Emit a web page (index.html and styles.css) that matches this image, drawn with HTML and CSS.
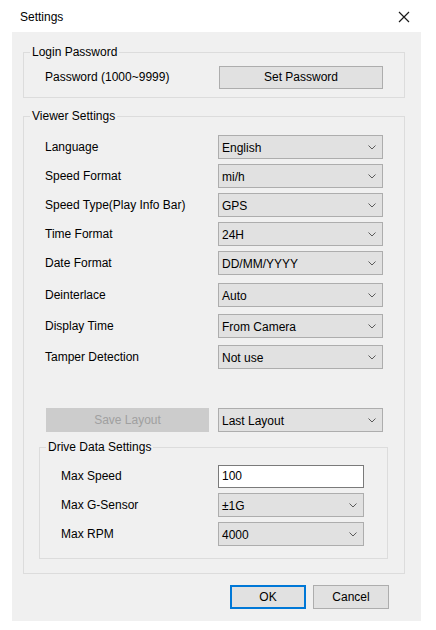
FILE: index.html
```html
<!DOCTYPE html>
<html>
<head>
<meta charset="utf-8">
<link rel="stylesheet" href="styles.css">
</head>
<body>
<div class="window">
  <div class="titlebar">
    <span class="title">Settings</span>
    <svg class="close" width="12" height="12" viewBox="0 0 12 12"><path d="M1 1 L11 11 M11 1 L1 11" stroke="#1a1a1a" stroke-width="1.2" fill="none"/></svg>
  </div>
  <div class="client">
    <fieldset class="group outer login">
      <legend>Login Password</legend>
      <div class="row">
        <span class="label">Password (1000~9999)</span>
        <button class="btn set">Set Password</button>
      </div>
    </fieldset>

    <fieldset class="group outer viewer">
      <legend>Viewer Settings</legend>
      <div class="rows tight">
        <div class="row"><span class="label">Language</span><div class="combo"><span>English</span><svg width="8" height="5" viewBox="0 0 8 5"><path d="M0.5 0.5 L4 4 L7.5 0.5" fill="none" stroke="#5a5a5a"/></svg></div></div>
        <div class="row"><span class="label">Speed Format</span><div class="combo"><span>mi/h</span><svg width="8" height="5" viewBox="0 0 8 5"><path d="M0.5 0.5 L4 4 L7.5 0.5" fill="none" stroke="#5a5a5a"/></svg></div></div>
        <div class="row"><span class="label">Speed Type(Play Info Bar)</span><div class="combo"><span>GPS</span><svg width="8" height="5" viewBox="0 0 8 5"><path d="M0.5 0.5 L4 4 L7.5 0.5" fill="none" stroke="#5a5a5a"/></svg></div></div>
        <div class="row"><span class="label">Time Format</span><div class="combo"><span>24H</span><svg width="8" height="5" viewBox="0 0 8 5"><path d="M0.5 0.5 L4 4 L7.5 0.5" fill="none" stroke="#5a5a5a"/></svg></div></div>
        <div class="row"><span class="label">Date Format</span><div class="combo"><span>DD/MM/YYYY</span><svg width="8" height="5" viewBox="0 0 8 5"><path d="M0.5 0.5 L4 4 L7.5 0.5" fill="none" stroke="#5a5a5a"/></svg></div></div>
      </div>
      <div class="rows wide">
        <div class="row"><span class="label">Deinterlace</span><div class="combo"><span>Auto</span><svg width="8" height="5" viewBox="0 0 8 5"><path d="M0.5 0.5 L4 4 L7.5 0.5" fill="none" stroke="#5a5a5a"/></svg></div></div>
        <div class="row"><span class="label">Display Time</span><div class="combo"><span>From Camera</span><svg width="8" height="5" viewBox="0 0 8 5"><path d="M0.5 0.5 L4 4 L7.5 0.5" fill="none" stroke="#5a5a5a"/></svg></div></div>
        <div class="row"><span class="label">Tamper Detection</span><div class="combo"><span>Not use</span><svg width="8" height="5" viewBox="0 0 8 5"><path d="M0.5 0.5 L4 4 L7.5 0.5" fill="none" stroke="#5a5a5a"/></svg></div></div>
      </div>

      <div class="row layout-row">
        <button class="btn disabled" disabled>Save Layout</button>
        <div class="combo"><span>Last Layout</span><svg width="8" height="5" viewBox="0 0 8 5"><path d="M0.5 0.5 L4 4 L7.5 0.5" fill="none" stroke="#5a5a5a"/></svg></div>
      </div>

      <fieldset class="group drive">
        <legend>Drive Data Settings</legend>
        <div class="rows">
          <div class="row"><span class="label">Max Speed</span><div class="textbox">100</div></div>
          <div class="row"><span class="label">Max G-Sensor</span><div class="combo"><span>±1G</span><svg width="8" height="5" viewBox="0 0 8 5"><path d="M0.5 0.5 L4 4 L7.5 0.5" fill="none" stroke="#5a5a5a"/></svg></div></div>
          <div class="row"><span class="label">Max RPM</span><div class="combo"><span>4000</span><svg width="8" height="5" viewBox="0 0 8 5"><path d="M0.5 0.5 L4 4 L7.5 0.5" fill="none" stroke="#5a5a5a"/></svg></div></div>
        </div>
      </fieldset>
    </fieldset>

    <div class="actions">
      <button class="btn dlg ok">OK</button>
      <button class="btn dlg">Cancel</button>
    </div>
  </div>
</div>
</body>
</html>
```
FILE: styles.css
```css
* { box-sizing: border-box; }
html, body { margin: 0; padding: 0; background: #ffffff; }
body {
  font-family: "Liberation Sans", Arial, sans-serif;
  font-size: 12px;
  color: #000;
}
.window { width: 436px; height: 630px; }

.titlebar {
  height: 32px;
  display: flex;
  align-items: center;
  justify-content: space-between;
  padding: 2px 26px 0 20px;
}
.title { font-size: 12px; }
.close { display: block; }

.client {
  margin: 0 15px 0 12px;
  background: #f0f0f0;
  padding: 13px 0 12px 11px;
}

.group {
  margin: 0;
  padding: 0 0 0 6px;
  min-width: 0;
  border: 1px solid #dcdcdc;
}
.group legend {
  padding: 0 2px;
  line-height: 14px;
  font-size: 12px;
}
.outer { width: 382px; }

.login { padding-top: 6px; padding-bottom: 8px; }
.viewer { margin-top: 11px; padding-top: 12px; padding-bottom: 14px; }

.row {
  display: grid;
  grid-template-columns: 173px 165px;
  align-items: center;
  padding-left: 15px;
  height: 24px;
}
.rows { display: flex; flex-direction: column; gap: 6px; }
.rows.tight { gap: 5px; }
.rows.wide { gap: 7px; margin-top: 8px; }

.btn {
  font-family: inherit;
  font-size: 12px;
  color: #000;
  background: #e1e1e1;
  border: 1px solid #adadad;
  margin: 0;
  padding: 0;
  height: 23px;
}
.set { width: 164px; margin-left: 1px; }

.combo {
  height: 24px;
  background: #e1e1e1;
  border: 1px solid #adadad;
  display: flex;
  align-items: center;
  justify-content: space-between;
  padding: 1px 6px 0 3px;
}
.combo svg { display: block; }

.layout-row { margin-top: 39px; }
.disabled {
  width: 163px;
  margin-left: 1px;
  height: 24px;
  background: #cccccc;
  border-color: #cccccc;
  color: #a0a0a0;
}

.drive {
  width: 349px;
  margin-top: 8px;
  margin-left: 9px;
  padding-top: 10px;
  padding-bottom: 12px;
}
.drive .row { grid-template-columns: 157px 146px; }
.drive .rows { gap: 5px; }
.textbox {
  height: 23px;
  background: #fff;
  border: 1px solid #7a7a7a;
  display: flex;
  align-items: center;
  padding: 0 3px;
}

.actions {
  display: flex;
  justify-content: flex-end;
  gap: 7px;
  margin-top: 11px;
  padding-right: 32px;
}
.dlg { width: 76px; height: 24px; }
.ok { border-color: #0078d7; box-shadow: inset 0 0 0 1px #0078d7; }
```
